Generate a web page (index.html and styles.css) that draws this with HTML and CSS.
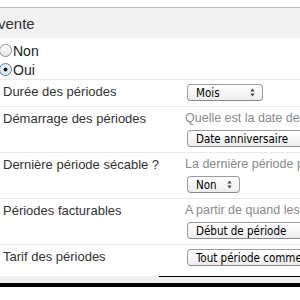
FILE: index.html
```html
<!DOCTYPE html>
<html lang="fr">
<head>
<meta charset="utf-8">
<title>Paramètres de vente</title>
<link rel="stylesheet" href="styles.css">
</head>
<body>
<div class="page">
  <div class="header"><h2 class="title">vente</h2></div>
  <div class="radios">
    <label class="radio">
      <svg class="radio-icon" width="13" height="13" viewBox="0 0 13 13">
        <defs><linearGradient id="ru" x1="0" y1="0" x2="0" y2="1"><stop offset="0" stop-color="#ffffff"/><stop offset="1" stop-color="#e4e4e4"/></linearGradient></defs>
        <circle cx="6.5" cy="6.5" r="6" fill="url(#ru)" stroke="#8f8f8f" stroke-width="1"/>
      </svg>Non
    </label>
    <label class="radio">
      <svg class="radio-icon" width="13" height="13" viewBox="0 0 13 13">
        <defs><linearGradient id="rc" x1="0" y1="0" x2="0" y2="1"><stop offset="0" stop-color="#f4f8fd"/><stop offset="1" stop-color="#d9e4f2"/></linearGradient></defs>
        <circle cx="6.5" cy="6.5" r="6" fill="url(#rc)" stroke="#587cae" stroke-width="1"/>
        <circle cx="6.5" cy="6.5" r="2" fill="#1c1c1c"/>
      </svg>Oui
    </label>
  </div>

  <div class="row">
    <div class="label">Durée des périodes</div>
    <div class="value">
      <span class="select select-mois">Mois<svg class="arrows" width="5" height="9" viewBox="0 0 5 9"><polygon points="0.3,3.6 2.5,0.6 4.7,3.6" /><polygon points="0.3,5.4 2.5,8.4 4.7,5.4" /></svg></span>
    </div>
  </div>

  <div class="row">
    <div class="label">Démarrage des périodes</div>
    <div class="value">
      <div class="help">Quelle est la date de début des périodes ?</div>
      <span class="select select-wide">Date anniversaire<svg class="arrows" width="5" height="9" viewBox="0 0 5 9"><polygon points="0.3,3.6 2.5,0.6 4.7,3.6" /><polygon points="0.3,5.4 2.5,8.4 4.7,5.4" /></svg></span>
    </div>
  </div>

  <div class="row">
    <div class="label">Dernière période sécable ?</div>
    <div class="value">
      <div class="help">La dernière période peut-elle être sécable ?</div>
      <span class="select select-non">Non<svg class="arrows" width="5" height="9" viewBox="0 0 5 9"><polygon points="0.3,3.6 2.5,0.6 4.7,3.6" /><polygon points="0.3,5.4 2.5,8.4 4.7,5.4" /></svg></span>
    </div>
  </div>

  <div class="row">
    <div class="label">Périodes facturables</div>
    <div class="value">
      <div class="help">A partir de quand les périodes sont facturables ?</div>
      <span class="select select-wide">Début de période<svg class="arrows" width="5" height="9" viewBox="0 0 5 9"><polygon points="0.3,3.6 2.5,0.6 4.7,3.6" /><polygon points="0.3,5.4 2.5,8.4 4.7,5.4" /></svg></span>
    </div>
  </div>

  <div class="row">
    <div class="label">Tarif des périodes</div>
    <div class="value">
      <span class="select select-xwide">Tout période commencée est due<svg class="arrows" width="5" height="9" viewBox="0 0 5 9"><polygon points="0.3,3.6 2.5,0.6 4.7,3.6" /><polygon points="0.3,5.4 2.5,8.4 4.7,5.4" /></svg></span>
    </div>
  </div>

  <div class="foot"><div class="foot-line"></div></div>
  <div class="bar"></div>
</div>
</body>
</html>
```

FILE: styles.css
```css
html, body {
  margin: 0;
  padding: 0;
  overflow: hidden;
  background: #ffffff;
}

.page {
  width: 480px;
  font-family: "Liberation Sans", Arial, sans-serif;
  color: #333333;
}

.header {
  margin-top: 7px;
  border-top: 1px solid #bdbdbd;
  height: 30px;
  background: #f2f2f2;
}

.title {
  margin: 0 0 0 -2px;
  font-size: 15px;
  font-weight: normal;
  line-height: 30px;
  padding-top: 1px;
  color: #333333;
}

.radios {
  padding-top: 3px;
  display: flex;
  flex-direction: column;
}

.radio {
  display: flex;
  align-items: center;
  height: 19px;
  font-size: 14px;
  color: #222222;
}

.radio-icon {
  margin-left: -1px;
  margin-right: 1px;
  flex: none;
}

.row {
  display: flex;
  border-top: 1px solid #e9e9e9;
  padding: 4px 0 5px 0;
}

.label {
  width: 182px;
  padding-left: 3px;
  flex: none;
  font-size: 13px;
  line-height: 15px;
  color: #333333;
  white-space: nowrap;
}

.value {
  display: flex;
  flex-direction: column;
  align-items: flex-start;
  gap: 4px;
}

.help {
  font-size: 12.5px;
  line-height: 15px;
  color: #8a8a8a;
  white-space: nowrap;
}

.select {
  position: relative;
  box-sizing: border-box;
  display: inline-flex;
  align-items: center;
  height: 17px;
  margin-left: 2px;
  padding-left: 8px;
  border: 1px solid #9c9c9c;
  border-bottom-color: #8a8a8a;
  border-radius: 4px;
  background: linear-gradient(#ffffff, #ededed);
  font-family: "DejaVu Sans Condensed", "DejaVu Sans", sans-serif;
  font-size: 11.5px;
  color: #000000;
  white-space: nowrap;
}

.select-mois { width: 76px; }
.select-non { width: 53px; }
.select-wide { width: 150px; }
.select-xwide { width: 210px; }

.arrows {
  position: absolute;
  right: 7px;
  top: 3px;
  fill: #4a4a4a;
}

.foot {
  height: 7px;
  background: #f1f1f1;
}

.foot-line {
  margin-top: 5px;
  margin-left: 159px;
  height: 1px;
  background: #000000;
}

.bar {
  height: 4px;
  background: #000000;
}
```
